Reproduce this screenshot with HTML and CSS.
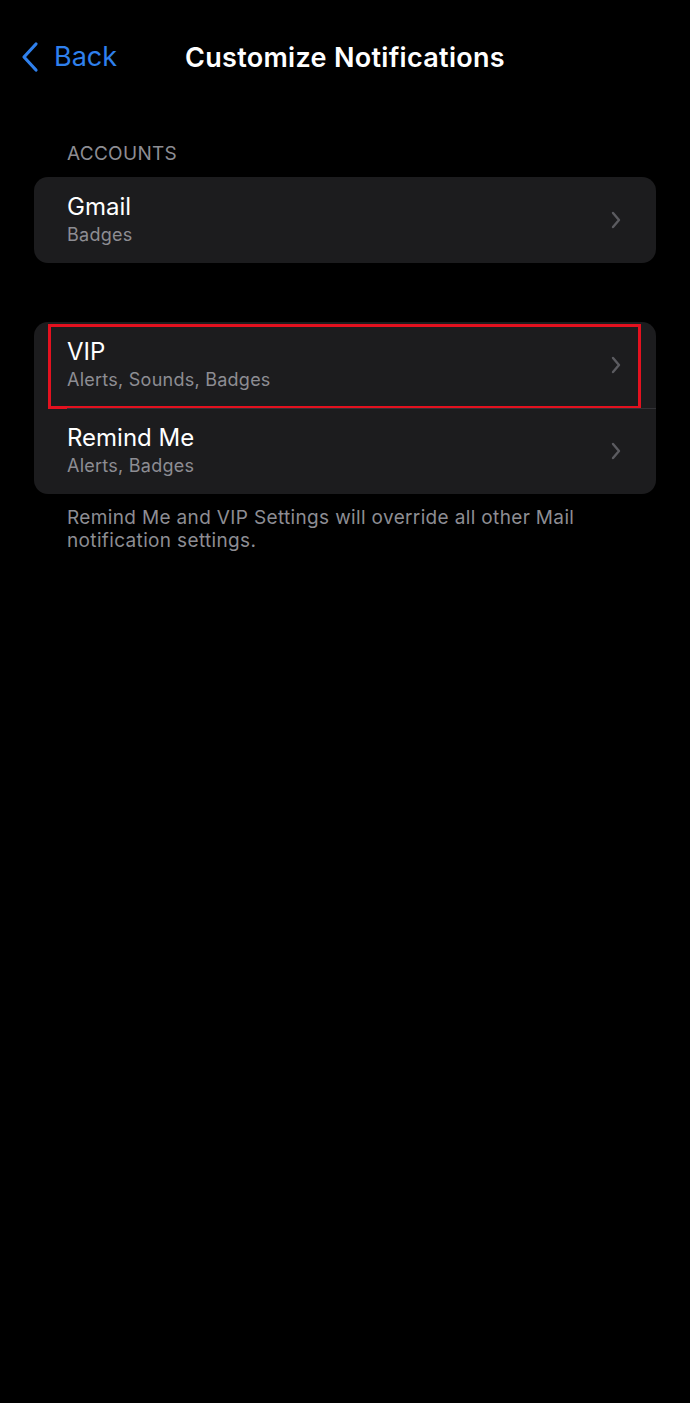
FILE: index.html
```html
<!DOCTYPE html>
<html lang="en">
<head>
  <meta charset="UTF-8" />
  <meta name="viewport" content="width=device-width, initial-scale=1" />
  <title>Customize Notifications</title>
  <link rel="stylesheet" href="styles.css">
</head>
<body>
  <header class="nav-bar">
    <a class="back-link" href="#">
      <svg class="back-chevron" width="20" height="32" viewBox="0 0 20 32">
        <path d="M16 3 L4 16 L16 29" fill="none" stroke="#2f80ed" stroke-width="3.2" stroke-linecap="round" stroke-linejoin="round"/>
      </svg>
      <span>Back</span>
    </a>
    <h1 class="nav-title">Customize Notifications</h1>
  </header>

  <main>
    <div class="section-label">ACCOUNTS</div>
    <div class="group">
      <div class="row">
        <div class="row-text">
          <div class="row-title">Gmail</div>
          <div class="row-sub">Badges</div>
        </div>
        <svg class="chevron" width="12" height="18" viewBox="0 0 12 18"><path d="M3 2 L9 9 L3 16" fill="none" stroke="#5b5b60" stroke-width="2.4" stroke-linecap="round" stroke-linejoin="round"/></svg>
      </div>
    </div>

    <div class="group group-second">
      <div class="row row-highlight">
        <div class="row-text">
          <div class="row-title">VIP</div>
          <div class="row-sub">Alerts, Sounds, Badges</div>
        </div>
        <svg class="chevron" width="12" height="18" viewBox="0 0 12 18"><path d="M3 2 L9 9 L3 16" fill="none" stroke="#5b5b60" stroke-width="2.4" stroke-linecap="round" stroke-linejoin="round"/></svg>
      </div>
      <div class="row">
        <div class="row-text">
          <div class="row-title">Remind Me</div>
          <div class="row-sub">Alerts, Badges</div>
        </div>
        <svg class="chevron" width="12" height="18" viewBox="0 0 12 18"><path d="M3 2 L9 9 L3 16" fill="none" stroke="#5b5b60" stroke-width="2.4" stroke-linecap="round" stroke-linejoin="round"/></svg>
      </div>
    </div>
    <p class="footnote">Remind Me and VIP Settings will override all other Mail notification settings.</p>
  </main>
</body>
</html>
```

FILE: styles.css
```css
body {
  font-family: Inter, "Noto Sans", sans-serif;
  background-color: #000;
  color: #fff;
  margin: 0;
  padding: 0;
  min-height: 1403px;
}
.nav-bar {
  position: relative;
  height: 56px;
  padding-top: 29px;
  display: flex;
  align-items: center;
  justify-content: center;
}
.back-link {
  position: absolute;
  left: 20px;
  top: 40px;
  display: flex;
  align-items: center;
  gap: 14px;
  color: #2f80ed;
  text-decoration: none;
  font-size: 27px;
}
.nav-title {
  margin: 0;
  font-size: 27px;
  font-weight: 600;
  letter-spacing: 0.3px;
}
main {
  padding: 0 34px;
}
.section-label {
  margin: 58px 0 0 33px;
  font-size: 19px;
  letter-spacing: 0.3px;
  color: #8d8d93;
  line-height: 22px;
}
.group {
  margin-top: 12px;
  background: #1c1c1e;
  border-radius: 14px;
}
.group-second {
  margin-top: 59px;
}
.row {
  position: relative;
  height: 86px;
  display: flex;
  align-items: center;
  padding: 0 34px 0 33px;
}
.row + .row::before {
  content: "";
  position: absolute;
  left: 33px;
  right: 0;
  top: 0;
  height: 1px;
  background: #323236;
}
.row-highlight::after {
  content: "";
  position: absolute;
  left: 14px;
  right: 15px;
  top: 2px;
  bottom: -1px;
  border: 3px solid #e3111f;
}
.row-text {
  flex: 1;
}
.row-title {
  font-size: 24px;
  line-height: 30px;
  margin-top: -2px;
}
.row-sub {
  font-size: 18px;
  letter-spacing: 0.25px;
  line-height: 22px;
  color: #8d8d93;
  margin-top: 2px;
}
.chevron {
  display: block;
}
.footnote {
  margin: 12px 0 0 33px;
  font-size: 19px;
  letter-spacing: 0.35px;
  line-height: 23px;
  color: #8d8d93;
  max-width: 540px;
}
```
